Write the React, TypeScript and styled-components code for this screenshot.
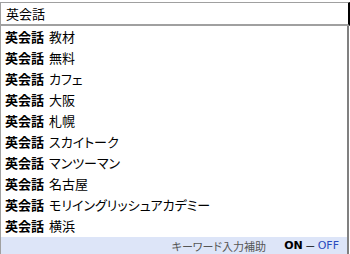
import React from "react";
import styled, { createGlobalStyle } from "styled-components";

const Global = createGlobalStyle`
  html, body { margin: 0; padding: 0; background: #fff; }
  body { font-family: "Noto Sans CJK JP", "Noto Sans", sans-serif; }
`;

const Page = styled.div`
  width: 350px;
  height: 254px;
  padding-top: 2px;
  box-sizing: border-box;
  display: flex;
  flex-direction: column;
`;

const Input = styled.div`
  height: 24px;
  box-sizing: border-box;
  border-top: 1px solid #a0a0a0;
  border-left: 1px solid #a0a0a0;
  border-right: 2px solid #000;
  border-bottom: 2px solid #a0a0a0;
  display: flex;
  align-items: center;
  padding-left: 5px;
  font-size: 13px;
  color: #000;
`;

const Dropdown = styled.div`
  width: 349px;
  flex: 1;
  box-sizing: border-box;
  border-left: 1px solid #a0a0a0;
  border-right: 2px solid #808080;
  display: flex;
  flex-direction: column;
`;

const List = styled.ul`
  list-style: none;
  margin: 0;
  padding: 0;
  flex: 1;
`;

const Row = styled.li`
  height: 21px;
  display: flex;
  align-items: center;
  padding-left: 4px;
  font-size: 13px;
  color: #000;
  white-space: nowrap;
`;

const Key = styled.b`
  font-weight: 700;
  margin-right: 5px;
`;

const Rest = styled.span`
  font-feature-settings: "palt";
`;

const Footer = styled.div`
  height: 17px;
  background: #dde5f8;
  display: flex;
  align-items: center;
  justify-content: flex-end;
  padding-right: 8px;
  font-size: 11px;
  color: #555;
`;

const Help = styled.span`
  margin-right: 18px;
  color: #555;
  font-feature-settings: "palt";
`;

const On = styled.span`
  font-family: "DejaVu Sans", sans-serif;
  font-weight: 700;
  color: #000;
`;

const Dash = styled.span`
  margin: 0 2px;
  color: #000;
`;

const Off = styled.span`
  font-family: "DejaVu Sans", sans-serif;
  color: #2a4bbf;
`;

const items = [
  "教材",
  "無料",
  "カフェ",
  "大阪",
  "札幌",
  "スカイトーク",
  "マンツーマン",
  "名古屋",
  "モリイングリッシュアカデミー",
  "横浜",
];

export default function App() {
  return (
    <>
      <Global />
      <Page>
        <Input>英会話</Input>
        <Dropdown>
          <List>
            {items.map((t) => (
              <Row key={t}>
                <Key>英会話</Key>
                <Rest>{t}</Rest>
              </Row>
            ))}
          </List>
          <Footer>
            <Help>キーワード入力補助</Help>
            <On>ON</On>
            <Dash>－</Dash>
            <Off>OFF</Off>
          </Footer>
        </Dropdown>
      </Page>
    </>
  );
}
